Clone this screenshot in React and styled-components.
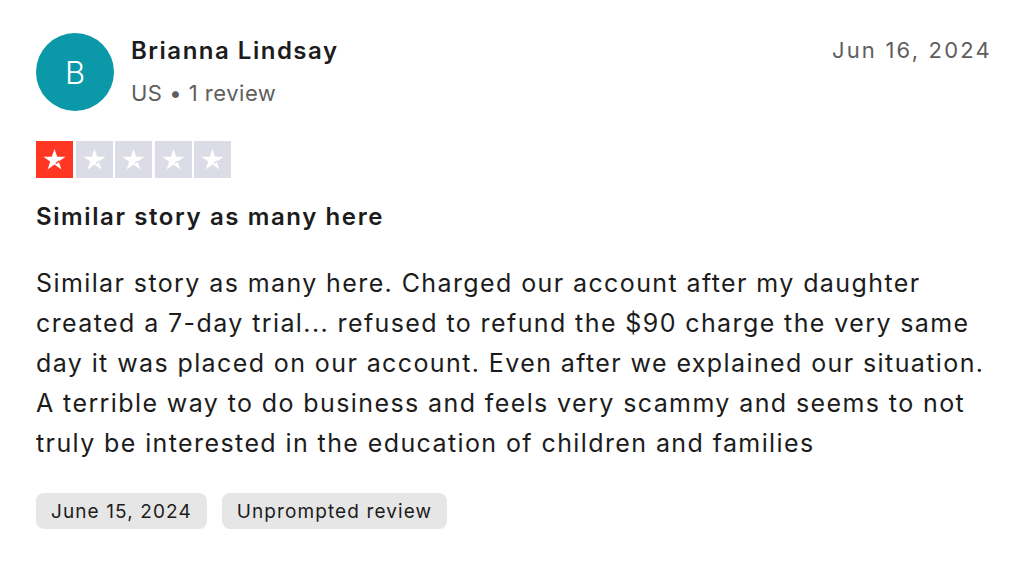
import React from 'react';
import styled, { createGlobalStyle } from 'styled-components';

const GlobalStyle = createGlobalStyle`
  html, body {
    margin: 0;
    padding: 0;
    background: #ffffff;
  }
  body {
    font-family: Inter, "Helvetica Neue", "Liberation Sans", sans-serif;
    color: #1c1c1c;
  }
`;

const Card = styled.article`
  width: 1024px;
  height: 562px;
  box-sizing: border-box;
  padding: 33px 32px 0 36px;
  display: flex;
  flex-direction: column;
`;

const Header = styled.header`
  display: flex;
  align-items: flex-start;
`;

const Avatar = styled.div`
  width: 78px;
  height: 78px;
  border-radius: 50%;
  background: #0b98a8;
  color: #ffffff;
  display: flex;
  align-items: center;
  justify-content: center;
  font-size: 31px;
  font-weight: 300;
  flex-shrink: 0;
`;

const Consumer = styled.div`
  display: flex;
  flex-direction: column;
  margin-left: 17px;
  padding-top: 1px;
  flex: 1;
`;

const Name = styled.div`
  font-size: 24px;
  font-weight: 600;
  line-height: 34px;
  letter-spacing: 1.5px;
  color: #1c1c1c;
`;

const Meta = styled.div`
  margin-top: 10px;
  font-size: 22px;
  line-height: 30px;
  letter-spacing: 0.5px;
  color: #5e5e5e;
`;

const PostedDate = styled.time`
  font-size: 22px;
  line-height: 34px;
  color: #5e5e5e;
  letter-spacing: 2.2px;
`;

const Stars = styled.div`
  display: flex;
  gap: 2.5px;
  margin-top: 30px;
`;

const StarBox = styled.div`
  width: 37px;
  height: 37px;
  background: ${p => p.$color};
  display: flex;
  align-items: center;
  justify-content: center;
`;

const Title = styled.h2`
  margin: 24px 0 0;
  font-size: 24px;
  font-weight: 600;
  line-height: 30px;
  letter-spacing: 1.6px;
  color: #1c1c1c;
`;

const Body = styled.p`
  margin: 31px 0 0;
  max-width: 956px;
  font-size: 25px;
  line-height: 40px;
  font-weight: 400;
  letter-spacing: 1.4px;
  color: #1c1c1c;
`;

const Tags = styled.div`
  display: flex;
  gap: 15px;
  margin-top: 30px;
`;

const Tag = styled.span`
  background: #e6e6e6;
  border-radius: 8px;
  padding: 0 15px;
  height: 36px;
  display: inline-flex;
  align-items: center;
  font-size: 19px;
  letter-spacing: 1.1px;
  color: #1c1c1c;
`;

function Star({ bg }) {
  return (
    <svg width="25" height="25" viewBox="0 0 24 24">
      <path
        fill="#ffffff"
        d="M12 1.8l2.6 7.5H22.6l-6.45 4.6 2.45 7.6L12 16.8 5.4 21.5l2.45-7.6L1.4 9.3h8z"
      />
      <path d="M13.2 15.9l3.6-2.6" stroke={bg} strokeWidth="1.3" fill="none" />
    </svg>
  );
}

export default function App() {
  const rating = 1;
  return (
    <>
      <GlobalStyle />
      <Card>
        <Header>
          <Avatar>B</Avatar>
          <Consumer>
            <Name>Brianna Lindsay</Name>
            <Meta>US • 1 review</Meta>
          </Consumer>
          <PostedDate>Jun 16, 2024</PostedDate>
        </Header>
        <Stars>
          {[1, 2, 3, 4, 5].map(i => {
            const bg = i <= rating ? '#ff3722' : '#dcdce6';
            return (
              <StarBox key={i} $color={bg}>
                <Star bg={bg} />
              </StarBox>
            );
          })}
        </Stars>
        <Title>Similar story as many here</Title>
        <Body>
          Similar story as many here. Charged our account after my daughter created a 7-day
          trial... refused to refund the $90 charge the very same day it was placed on our
          account. Even after we explained our situation. A terrible way to do business and
          feels very scammy and seems to not truly be interested in the education of children
          and families
        </Body>
        <Tags>
          <Tag>June 15, 2024</Tag>
          <Tag>Unprompted review</Tag>
        </Tags>
      </Card>
    </>
  );
}
